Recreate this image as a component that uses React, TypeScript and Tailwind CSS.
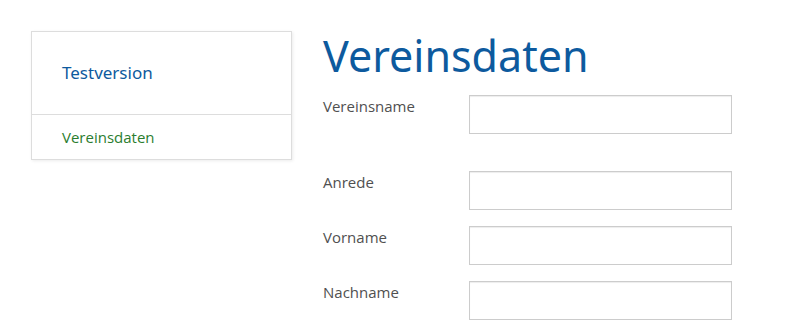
const fields = ["Vereinsname", "Anrede", "Vorname", "Nachname"];

function Field({ label }: { label: string }) {
  return (
    <div className="flex items-start">
      <label className="w-[146px] pt-[1px] text-[15px] leading-[20px] text-[#505050]">
        {label}
      </label>
      <input
        type="text"
        className="h-[39px] w-[263px] border border-[#cccccc] bg-white shadow-[inset_0_1px_1px_rgba(0,0,0,0.075)] outline-none"
      />
    </div>
  );
}

export default function App() {
  return (
    <div
      className="flex min-h-[333px] w-[803px] gap-[31px] bg-white pl-[31px] pt-[31px]"
      style={{ fontFamily: '"Open Sans", "Liberation Sans", sans-serif' }}
    >
      {/* sidebar */}
      <div className="h-[129px] w-[261px] border border-[#dddddd] bg-white shadow-[1px_1px_3px_rgba(0,0,0,0.08)]">
        <div
          className="flex h-[83px] items-center border-b border-[#dddddd] pl-[30px] text-[17px] text-[#0d5a9e]"
          style={{ fontFamily: '"Noto Sans", "Open Sans", sans-serif' }}
        >
          Testversion
        </div>
        <div className="flex h-[44px] items-center pl-[30px] text-[15px] text-[#2b7d2f]">
          Vereinsdaten
        </div>
      </div>

      {/* main */}
      <div className="flex flex-col">
        <h1
          className="mb-[14px] text-[43px] leading-[50px] text-[#0d5a9e]"
          style={{ fontFamily: '"Noto Sans", "Open Sans", sans-serif' }}
        >
          Vereinsdaten
        </h1>
        <div className="mb-[37px]">
          <Field label={fields[0]} />
        </div>
        <div className="flex flex-col gap-[16px]">
          {fields.slice(1).map((f) => (
            <Field key={f} label={f} />
          ))}
        </div>
      </div>
    </div>
  );
}
